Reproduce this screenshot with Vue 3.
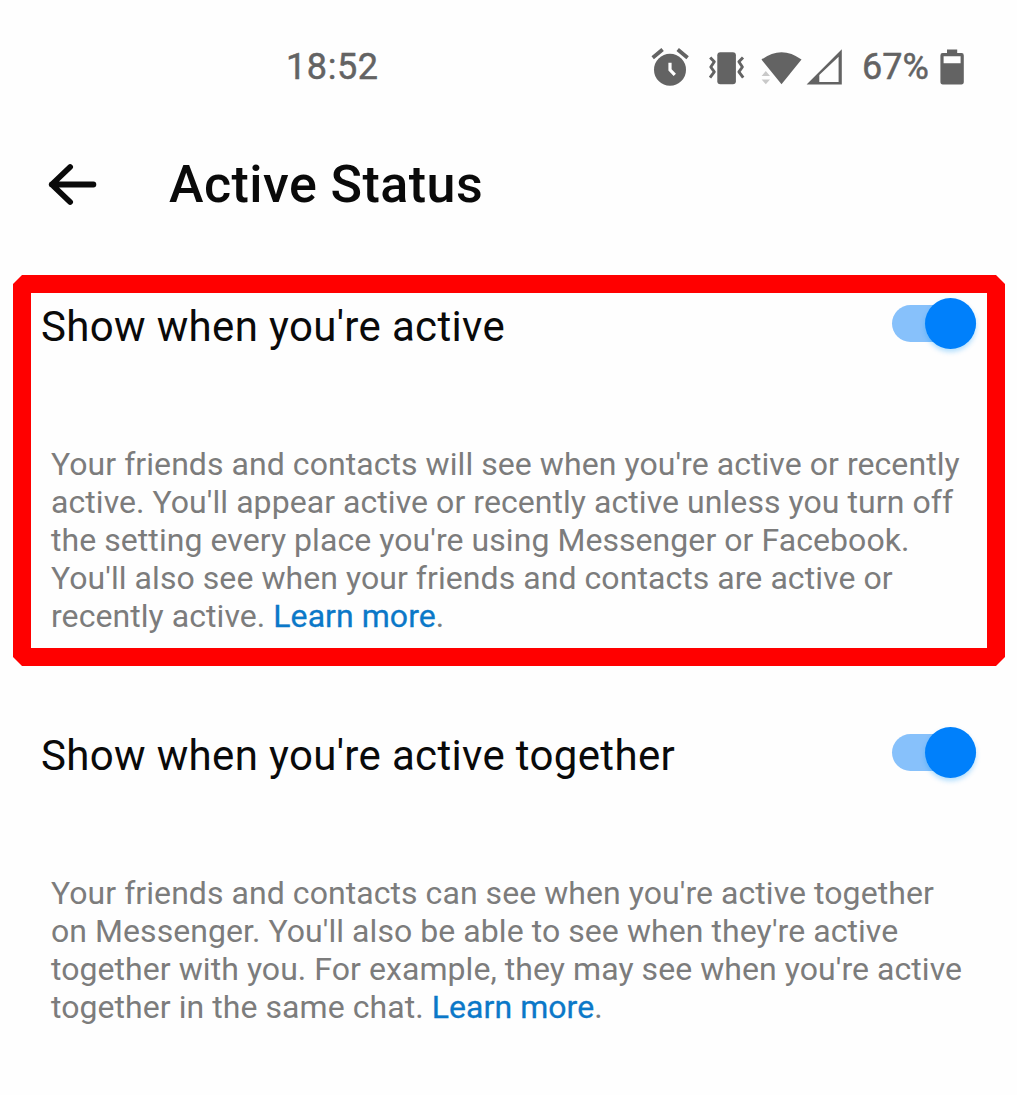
<script setup>
const settings = [
  {
    id: 'active',
    title: "Show when you're active",
    highlighted: true,
    lines: [
      'Your friends and contacts will see when you\'re active or recently',
      "active. You'll appear active or recently active unless you turn off",
      "the setting every place you're using Messenger or Facebook.",
      "You'll also see when your friends and contacts are active or",
    ],
    last: 'recently active. ',
  },
  {
    id: 'together',
    title: "Show when you're active together",
    highlighted: false,
    lines: [
      "Your friends and contacts can see when you're active together",
      "on Messenger. You'll also be able to see when they're active",
      "together with you. For example, they may see when you're active",
    ],
    last: 'together in the same chat. ',
  },
]
</script>

<template>
  <main class="screen">
    <header class="status-bar">
      <span class="time">18:52</span>
      <div class="indicators">
        <svg class="icons" width="204" height="60" viewBox="0 0 204 60" aria-hidden="true">
          <g fill="#636363">
            <circle cx="30" cy="32.7" r="16" />
            <path d="M12.7 20.7 22.6 12.5M37.7 12.5 47.6 20.7" fill="none" stroke="#636363" stroke-width="3.8" />
            <path d="M30 25.8V32.8L34.8 37.8" fill="none" stroke="#fff" stroke-width="3.2" />
            <rect x="77.3" y="15.2" width="18.6" height="32" rx="3" />
            <path d="M70.2 20.4 74.3 24.8 70.8 30 74.3 34.8 70 40.6M103 20.4 98.9 24.8 102.4 30 98.9 34.8 103.2 40.6" fill="none" stroke="#636363" stroke-width="2.9" stroke-linejoin="round" />
            <path d="M121.5 22.6Q141.5 7.8 161.5 22.6L141.5 47.2Z" />
            <path d="M125.8 34 130 39H121.6ZM121.6 42.5H130L125.8 47.2Z" fill="#c9c9c9" />
            <path d="M201.8 12.2V47.4H166.6ZM198.6 19.8 179.3 38V45H198.6Z" fill-rule="evenodd" />
          </g>
        </svg>
        <span class="percent">67%</span>
        <svg class="battery" width="26" height="60" viewBox="0 0 26 60" aria-hidden="true">
          <path fill="#636363" fill-rule="evenodd" d="M8 12.4H18.2V16H22.6Q24.8 16 24.8 18.4V44.8Q24.8 47.4 22.4 47.4H3.8Q1.4 47.4 1.4 44.8V18.4Q1.4 16 3.6 16H8ZM4.6 19.2V26.2H21.6V19.2Z" />
        </svg>
      </div>
    </header>

    <div class="app-bar">
      <svg width="50" height="80" viewBox="0 0 50 80" aria-hidden="true">
        <path d="M22.1 23 3.8 40.5 22.1 58M3.8 40.5H45.4" fill="none" stroke="#0a0a0a" stroke-width="5.8" stroke-linecap="round" stroke-linejoin="round" />
      </svg>
      <h1>Active Status</h1>
    </div>

    <section v-for="s in settings" :key="s.id" class="setting" :class="{ highlighted: s.highlighted }">
      <div class="row">
        <h2>{{ s.title }}</h2>
        <div class="toggle" role="switch" aria-checked="true">
          <span class="thumb"></span>
        </div>
      </div>
      <p>
        <span v-for="line in s.lines" :key="line" class="line">{{ line }}</span>
        <span class="line">{{ s.last }}<a>Learn more</a>.</span>
      </p>
    </section>
  </main>
</template>

<style>
body {
  margin: 0;
  background: #fff;
}
</style>

<style scoped>
.screen {
  box-sizing: border-box;
  width: 1017px;
  height: 1095px;
  padding-top: 37px;
  overflow: hidden;
  background: #fefefe;
  font-family: Roboto, sans-serif;
}
.status-bar {
  display: flex;
  justify-content: space-between;
  height: 60px;
  padding: 0 52px 0 286px;
  color: #636363;
  font-size: 36px;
  line-height: 60px;
  -webkit-text-stroke: 0.5px #636363;
}
.time {
  letter-spacing: 0.6px;
}
.indicators {
  display: flex;
}
.icons,
.battery {
  display: block;
}
.percent {
  width: 77px;
  padding-left: 18px;
  white-space: nowrap;
}
.app-bar {
  display: flex;
  align-items: center;
  gap: 71px;
  height: 80px;
  margin-top: 47px;
  padding-left: 48px;
}
h1,
h2,
p {
  margin: 0;
}
h1 {
  padding-top: 2px;
  color: #0a0a0a;
  font-size: 52px;
  font-weight: 500;
  line-height: 80px;
  letter-spacing: 0.45px;
}
.setting {
  box-sizing: border-box;
  width: 992px;
  height: 391px;
  margin: 38px 0 0 13px;
  padding: 3px 10px 0;
  border: 18px solid transparent;
}
.app-bar + .setting {
  margin-top: 51px;
}
.highlighted {
  border-color: #f00;
  clip-path: polygon(9px 0, 983px 0, 100% 9px, 100% 382px, 983px 100%, 9px 100%, 0 382px, 0 9px);
}
.row {
  display: flex;
  justify-content: space-between;
  height: 60px;
}
h2 {
  padding-top: 1px;
  color: #0a0a0a;
  font-size: 42px;
  font-weight: 400;
  line-height: 60px;
  letter-spacing: 0.34px;
  white-space: nowrap;
}
.toggle {
  display: flex;
  align-items: center;
  justify-content: flex-end;
  width: 84px;
  height: 37px;
  margin: 9px 1px 0 0;
  border-radius: 19px;
  background: #87c1fb;
}
.thumb {
  flex: none;
  width: 51px;
  height: 51px;
  border-radius: 50%;
  background: #0080fb;
  box-shadow: 0 3px 5px rgba(0, 150, 251, 0.3);
}
p {
  margin-top: 90px;
  padding-left: 10px;
  color: #7c7c7c;
  font-size: 32px;
  line-height: 37.9px;
  letter-spacing: 0.06px;
}
.line {
  display: block;
  white-space: pre;
}
a {
  color: #0b78c8;
  -webkit-text-stroke: 0.3px #0b78c8;
}
</style>
